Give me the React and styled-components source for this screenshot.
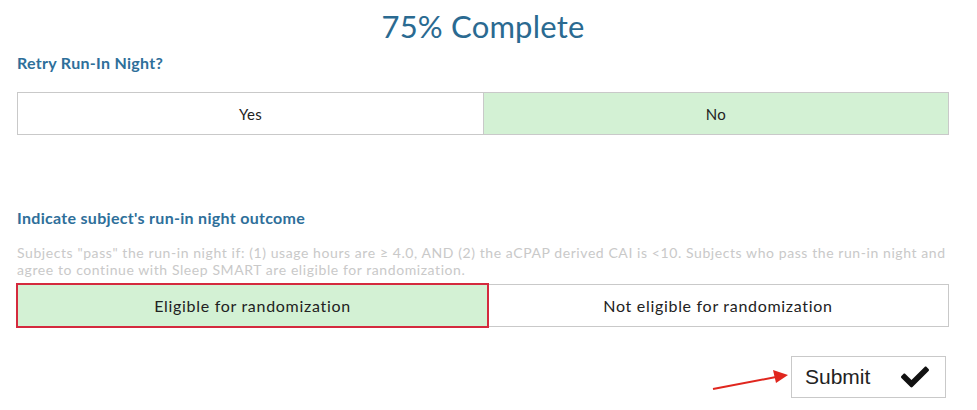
import React from 'react';
import styled, {createGlobalStyle} from 'styled-components';
import {FaCheck} from 'react-icons/fa';

const Global=createGlobalStyle`
    body{
        margin:0;
        background:#fff;
        font-family:Lato,"Open Sans",sans-serif;
    }
`;

const Page=styled.div`
    position:relative;
    width:977px;
    height:410px;
    box-sizing:border-box;
    padding:6px 28px 0 17px;
`;

const Title=styled.h1`
    margin:0;
    text-align:center;
    font-size:31px;
    line-height:40px;
    font-weight:400;
    letter-spacing:0.2px;
    color:#2a6a91;
`;

const Label=styled.h2`
    margin:${p=>p.top||0}px 0 0;
    font-size:16px;
    line-height:20px;
    font-weight:700;
    letter-spacing:0.3px;
    color:#2e6f9a;
`;

const Help=styled.p`
    margin:16px 0 0;
    font-size:14px;
    line-height:17px;
    letter-spacing:0.58px;
    color:#c9c9c9;
`;

const Choices=styled.div`
    display:grid;
    grid-template-columns:${p=>p.split||'1fr 1fr'};
    margin-top:${p=>p.top||0}px;
    border:1px solid #c9c9c9;
    height:43px;
    box-sizing:border-box;
`;

const Choice=styled.div`
    position:relative;
    display:flex;
    align-items:center;
    justify-content:center;
    font-size:${p=>p.size||15}px;
    letter-spacing:${p=>p.size?0.7:0.3}px;
    color:#222;
    background:${p=>p.selected?'#d3f1d4':'#fff'};
    & + &{
        border-left:1px solid #c9c9c9;
    }
    ${p=>p.flagged&&`
        box-shadow:0 0 0 2px #d42a3e;
        z-index:1;
    `}
`;

const Footer=styled.div`
    display:flex;
    justify-content:flex-end;
    padding-right:3px;
    margin-top:29px;
`;

const SubmitButton=styled.button`
    display:flex;
    align-items:center;
    justify-content:space-between;
    width:155px;
    height:42px;
    box-sizing:border-box;
    padding:0 16px 0 13px;
    background:#fff;
    border:1px solid #c9c9c9;
    font-family:"Liberation Sans",Arial,sans-serif;
    font-size:21px;
    color:#222;
`;

const Arrow=styled.svg`
    position:absolute;
    left:710px;
    top:366px;
`;

export default function App(){
    return (
        <Page>
            <Global/>
            <Title>75% Complete</Title>
            <Label top={7}>Retry Run-In Night?</Label>
            <Choices top={19}>
                <Choice>Yes</Choice>
                <Choice selected>No</Choice>
            </Choices>
            <Label top={73}>Indicate subject's run-in night outcome</Label>
            <Help>Subjects "pass" the run-in night if: (1) usage hours are ≥ 4.0, AND (2) the aCPAP derived CAI is &lt;10. Subjects who pass the run-in night and agree to continue with Sleep SMART are eligible for randomization.</Help>
            <Choices top={6} split="470fr 462fr">
                <Choice selected flagged size={16}>Eligible for randomization</Choice>
                <Choice size={16}>Not eligible for randomization</Choice>
            </Choices>
            <Footer>
                <SubmitButton>Submit <FaCheck size={28} color="#111"/></SubmitButton>
            </Footer>
            <Arrow width="80" height="30" viewBox="0 0 80 30">
                <line x1="3" y1="23" x2="66" y2="11" stroke="#e0261e" strokeWidth="2"/>
                <polygon points="78,9 63,4 66,17" fill="#e0261e"/>
            </Arrow>
        </Page>
    );
}
